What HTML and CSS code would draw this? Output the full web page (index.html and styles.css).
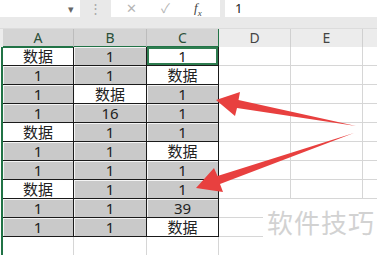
FILE: index.html
```html
<!DOCTYPE html>
<html lang="zh-CN">
<head>
    <meta charset="UTF-8">
    <title>数据</title>
    <link rel="stylesheet" href="styles.css">
</head>
<body>
    <!-- 编辑栏 -->
    <div class="toolbar">
        <div class="namebox"><span class="drop">▾</span></div>
        <div class="dots">⋮</div>
        <div class="btnbox">
            <span class="btn">✕</span>
            <span class="btn">✓</span>
            <span class="fx">f<sub>x</sub></span>
        </div>
        <div class="formula">1</div>
    </div>

    <!-- 列标题 -->
    <div class="colhead">
        <div class="gutter"></div>
        <div class="hd sel">A</div>
        <div class="hd sel">B</div>
        <div class="hd sel last">C</div>
        <div class="hd">D</div>
        <div class="hd">E</div>
        <div class="hd rest"></div>
    </div>

    <!-- 表格 -->
    <div class="sheet">
        <div class="row"><div class="c">数据</div><div class="c g">1</div><div class="c active">1</div><div class="e"></div><div class="e"></div><div class="e rest"></div></div>
        <div class="row"><div class="c g">1</div><div class="c g">1</div><div class="c">数据</div><div class="e"></div><div class="e"></div><div class="e rest"></div></div>
        <div class="row"><div class="c g">1</div><div class="c">数据</div><div class="c g">1</div><div class="e"></div><div class="e"></div><div class="e rest"></div></div>
        <div class="row"><div class="c g">1</div><div class="c g">16</div><div class="c g">1</div><div class="e"></div><div class="e"></div><div class="e rest"></div></div>
        <div class="row"><div class="c">数据</div><div class="c g">1</div><div class="c g">1</div><div class="e"></div><div class="e"></div><div class="e rest"></div></div>
        <div class="row"><div class="c g">1</div><div class="c g">1</div><div class="c">数据</div><div class="e"></div><div class="e"></div><div class="e rest"></div></div>
        <div class="row"><div class="c g">1</div><div class="c g">1</div><div class="c g">1</div><div class="e"></div><div class="e"></div><div class="e rest"></div></div>
        <div class="row"><div class="c">数据</div><div class="c g">1</div><div class="c g">1</div><div class="e"></div><div class="e"></div><div class="e rest"></div></div>
        <div class="row"><div class="c g">1</div><div class="c g">1</div><div class="c g">39</div><div class="e"></div><div class="e"></div><div class="e rest"></div></div>
        <div class="row"><div class="c g">1</div><div class="c g">1</div><div class="c">数据</div><div class="e"></div><div class="e"></div><div class="e rest"></div></div>
        <div class="row"><div class="e"></div><div class="e"></div><div class="e"></div><div class="e"></div><div class="e"></div><div class="e rest"></div></div>
    </div>

    <!-- 箭头 -->
    <svg class="arrows" width="377" height="255" viewBox="0 0 377 255">
        <polygon points="216,100 240,92 238.5,100 356,126 237,108 235,116" fill="#e8403f"/>
        <polygon points="196,188 214,168 217.5,176 354,133 220,184 223,192" fill="#e8403f"/>
    </svg>

    <!-- 水印 -->
    <div class="watermark">软件技巧</div>
</body>
</html>
```

FILE: styles.css
```css
/* 全体 */
body {
    margin: 0;
    width: 377px;
    height: 255px;
    overflow: hidden;
    position: relative;
    background: #fff;
    font-family: "Noto Sans", "Noto Sans CJK SC", sans-serif;
}

/* 编辑栏 */
.toolbar {
    display: flex;
    height: 17px;
    background: #e9e9e9;
    padding-bottom: 11px;
}

.namebox {
    width: 80px;
    background: #fff;
    display: flex;
    justify-content: flex-end;
    align-items: center;
}

.drop {
    font-size: 11px;
    color: #666;
    margin-right: 6px;
    line-height: 1;
}

.dots {
    width: 31px;
    text-align: center;
    color: #a8a8a8;
    font-size: 13px;
    line-height: 17px;
}

.btnbox {
    width: 109px;
    background: #fff;
    display: flex;
    align-items: center;
}

.btn {
    color: #b5b5b5;
    font-size: 13px;
    line-height: 1;
    margin-left: 15px;
    width: 20px;
}

.fx {
    margin-left: 13px;
    font-family: "Liberation Serif", serif;
    font-style: italic;
    font-size: 13px;
    color: #444;
}

.fx sub {
    font-size: 9px;
}

.formula {
    flex: 1;
    margin-left: 5px;
    background: #fff;
    padding-left: 10px;
    font-size: 13px;
    line-height: 17px;
    color: #222;
}

/* 列标题 */
.colhead {
    display: grid;
    grid-template-columns: 3px 71px 73px 72px 72px 72px 1fr;
    height: 19px;
    background: #ececec;
    border-top: 1px solid #dcdcdc;
    box-sizing: border-box;
}

.hd {
    box-sizing: border-box;
    border-right: 1px solid #d0d0d0;
    text-align: center;
    font-size: 14px;
    line-height: 18px;
    color: #444;
}

.hd.sel {
    background: #d4d4d4;
    border-right-color: #bcbcbc;
    border-bottom: 2px solid #217346;
    color: #2a4f38;
    line-height: 17px;
}

.hd.last {
    border-right-color: #217346;
}

.hd.rest {
    border-right: none;
}

/* 单元格 */
.sheet {
    margin-left: 1px;
    border-left: 2px solid #217346;
}

.row {
    display: grid;
    grid-template-columns: 71px 73px 72px 72px 72px 1fr;
    height: 19px;
}

.c, .e {
    box-sizing: border-box;
    text-align: center;
    font-family: "Noto Sans", "Noto Sans CJK SC", sans-serif;
    font-size: 15px;
    line-height: 18px;
    color: #222;
}

.c {
    border-right: 1px solid #1a1a1a;
    border-bottom: 1px solid #1a1a1a;
}

.e {
    border-right: 1px solid #d6d6d6;
    border-bottom: 1px solid #d6d6d6;
}

.e.rest {
    border-right: none;
}

.g {
    background: #c9c9c9;
    box-shadow: inset 1px 1px 0 #f4f4f4;
}

.active {
    box-shadow: inset 0 0 0 2px #2e7d50;
}

/* 箭头 */
.arrows {
    position: absolute;
    top: 0;
    left: 0;
    pointer-events: none;
}

/* 水印 */
.watermark {
    position: absolute;
    left: 263px;
    top: 199px;
    width: 114px;
    height: 56px;
    background: #fff;
    padding-left: 4px;
    box-sizing: border-box;
    font-family: "Noto Sans CJK SC", sans-serif;
    font-size: 26px;
    line-height: 46px;
    letter-spacing: 1px;
    color: #d2d2d2;
}
```
